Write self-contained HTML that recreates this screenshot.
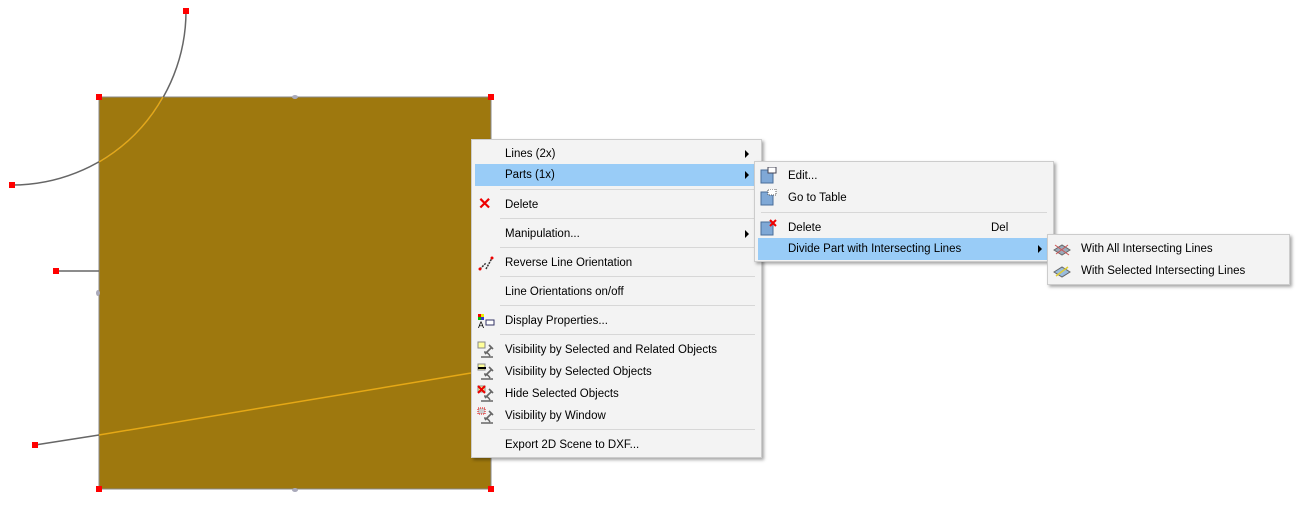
<!DOCTYPE html>
<html><head><meta charset="utf-8"><style>
html,body{margin:0;padding:0;background:#fff;width:1306px;height:519px;overflow:hidden;position:relative;font-family:"Segoe UI","Liberation Sans",sans-serif;font-size:11.5px;color:#000}
.m{position:absolute;background:#f3f3f3;border:1px solid #ccc;box-shadow:2px 2px 3px rgba(0,0,0,.35)}
.i{position:absolute;left:0;right:0;height:22px;line-height:22px}
.i span{position:absolute}
.hl{background:#99ccf7}
.sep{position:absolute;height:1px;background:#d7d7d7}
.ar{position:absolute;width:0;height:0;border-top:4px solid transparent;border-bottom:4px solid transparent;border-left:4px solid #000;top:7px}
.ic{position:absolute}
</style></head><body>
<svg width="1306" height="519" style="position:absolute;left:0;top:0">
<rect x="99" y="97" width="392" height="392" fill="#9e780e" stroke="#888" stroke-width="1"/>
<path d="M186 11 A174 174 0 0 1 12 185" fill="none" stroke="#666" stroke-width="1.5"/>
<path d="M163 97 A174 174 0 0 1 99 162" fill="none" stroke="#e5a816" stroke-width="1.5"/>
<line x1="56" y1="271" x2="99" y2="271" stroke="#666" stroke-width="1.5"/>
<line x1="35" y1="445" x2="99" y2="435" stroke="#666" stroke-width="1.5"/>
<line x1="99" y1="435" x2="471" y2="373" stroke="#e5a816" stroke-width="1.5"/>
<g fill="#f00">
<rect x="183" y="8" width="6" height="6"/><rect x="9" y="182" width="6" height="6"/><rect x="53" y="268" width="6" height="6"/><rect x="32" y="442" width="6" height="6"/>
<rect x="96" y="94" width="6" height="6"/><rect x="488" y="94" width="6" height="6"/><rect x="96" y="486" width="6" height="6"/><rect x="488" y="486" width="6" height="6"/>
</g>
<g fill="#aab"><ellipse cx="295" cy="97" rx="3" ry="2"/><ellipse cx="295" cy="490" rx="3" ry="2"/><ellipse cx="98" cy="293" rx="2" ry="3"/></g>
</svg>

<div class="m" style="left:471px;top:139px;width:289px;height:317px">
<div class="i" style="top:3px"><span style="left:33px">Lines (2x)</span><div class="ar" style="left:273px"></div></div>
<div class="i hl" style="top:24px;left:3px;right:6px"><span style="left:30px">Parts (1x)</span><div class="ar" style="left:270px"></div></div>
<div class="sep" style="top:49px;left:28px;right:6px"></div>
<div class="i" style="top:54px"><span style="left:6px;color:#e00;font-weight:bold;font-size:16px">✕</span><span style="left:33px">Delete</span></div>
<div class="sep" style="top:78px;left:28px;right:6px"></div>
<div class="i" style="top:83px"><span style="left:33px">Manipulation...</span><div class="ar" style="left:273px"></div></div>
<div class="sep" style="top:107px;left:28px;right:6px"></div>
<div class="i" style="top:112px"><svg class="ic" style="left:6px;top:3px" width="16" height="16"><line x1="2" y1="14" x2="8" y2="8" stroke="#333" stroke-width="1.5" stroke-dasharray="2 1"/><line x1="8" y1="14" x2="14" y2="3" stroke="#333" stroke-width="1.5" stroke-dasharray="2 1"/><circle cx="2" cy="14" r="1.5" fill="#e00"/><circle cx="14" cy="3" r="1.5" fill="#e00"/></svg><span style="left:33px">Reverse Line Orientation</span></div>
<div class="sep" style="top:136px;left:28px;right:6px"></div>
<div class="i" style="top:141px"><span style="left:33px">Line Orientations on/off</span></div>
<div class="sep" style="top:165px;left:28px;right:6px"></div>
<div class="i" style="top:170px"><svg class="ic" style="left:5px;top:3px" width="18" height="16"><rect x="1" y="1" width="3" height="3" fill="#e00"/><rect x="4" y="1" width="3" height="3" fill="#ee0"/><rect x="1" y="4" width="3" height="3" fill="#0b0"/><rect x="4" y="4" width="3" height="3" fill="#33c"/><text x="1" y="15" font-size="9" font-family="Liberation Sans">A</text><rect x="9" y="7" width="8" height="5" fill="#fff" stroke="#336"/></svg><span style="left:33px">Display Properties...</span></div>
<div class="sep" style="top:194px;left:28px;right:6px"></div>
<div class="i" style="top:199px"><svg class="ic" style="left:5px;top:2px" width="18" height="18"><rect x="1" y="1" width="7" height="6" fill="#ff9" stroke="#888"/><path d="M4 16h12M8 13l6-6M12 4l4 4M7 11c3 0 5 2 6 4" stroke="#666" stroke-width="1.6" fill="none"/></svg><span style="left:33px">Visibility by Selected and Related Objects</span></div>
<div class="i" style="top:221px"><svg class="ic" style="left:5px;top:2px" width="18" height="18"><rect x="1" y="1" width="7" height="6" fill="#ff9" stroke="#888"/><rect x="1" y="4" width="8" height="2" fill="#000"/><path d="M4 16h12M8 13l6-6M12 4l4 4M7 11c3 0 5 2 6 4" stroke="#666" stroke-width="1.6" fill="none"/></svg><span style="left:33px">Visibility by Selected Objects</span></div>
<div class="i" style="top:243px"><svg class="ic" style="left:5px;top:2px" width="18" height="18"><rect x="1" y="1" width="7" height="6" fill="#ff9" stroke="#888"/><path d="M4 16h12M8 13l6-6M12 4l4 4M7 11c3 0 5 2 6 4" stroke="#666" stroke-width="1.6" fill="none"/><path d="M1 1l7 7M8 1l-7 7" stroke="#e00" stroke-width="2"/></svg><span style="left:33px">Hide Selected Objects</span></div>
<div class="i" style="top:265px"><svg class="ic" style="left:5px;top:2px" width="18" height="18"><rect x="1" y="1" width="7" height="6" fill="#ccc" stroke="#e00" stroke-dasharray="1 1"/><path d="M4 16h12M8 13l6-6M12 4l4 4M7 11c3 0 5 2 6 4" stroke="#666" stroke-width="1.6" fill="none"/></svg><span style="left:33px">Visibility by Window</span></div>
<div class="sep" style="top:289px;left:28px;right:6px"></div>
<div class="i" style="top:294px"><span style="left:33px">Export 2D Scene to DXF...</span></div>
</div>

<div class="m" style="left:754px;top:161px;width:298px;height:99px">
<div class="i" style="top:3px"><svg class="ic" style="left:5px;top:2px" width="18" height="18"><rect x="1" y="3" width="12" height="13" fill="#7fa8d6" stroke="#4a6e99"/><rect x="8" y="0" width="8" height="6" fill="#fff" stroke="#445"/></svg><span style="left:33px">Edit...</span></div>
<div class="i" style="top:25px"><svg class="ic" style="left:5px;top:2px" width="18" height="18"><rect x="1" y="3" width="12" height="13" fill="#7fa8d6" stroke="#4a6e99"/><rect x="8" y="0" width="8" height="6" fill="#fff" stroke="#555" stroke-dasharray="1 1"/></svg><span style="left:33px">Go to Table</span></div>
<div class="sep" style="top:50px;left:6px;right:6px"></div>
<div class="i" style="top:55px"><svg class="ic" style="left:5px;top:2px" width="18" height="18"><rect x="1" y="3" width="12" height="13" fill="#7fa8d6" stroke="#4a6e99"/><path d="M10 1l6 6M16 1l-6 6" stroke="#e00" stroke-width="2"/></svg><span style="left:33px">Delete</span><span style="left:236px">Del</span></div>
<div class="i hl" style="top:76px;left:3px;right:6px"><span style="left:30px">Divide Part with Intersecting Lines</span><div class="ar" style="left:280px"></div></div>
</div>

<div class="m" style="left:1047px;top:234px;width:241px;height:49px">
<div class="i" style="top:3px"><svg class="ic" style="left:5px;top:3px" width="18" height="16"><path d="M1 9l8-5 8 5-8 5z" fill="#9ab" stroke="#666"/><path d="M2 4l14 10M3 13l12-9" stroke="#c55" stroke-width="1"/></svg><span style="left:33px">With All Intersecting Lines</span></div>
<div class="i" style="top:25px"><svg class="ic" style="left:5px;top:3px" width="18" height="16"><path d="M1 9l8-5 8 5-8 5z" fill="#9bd" stroke="#666"/><path d="M3 13l12-9" stroke="#dc3" stroke-width="1.5"/></svg><span style="left:33px">With Selected Intersecting Lines</span></div>
</div>
</body></html>
